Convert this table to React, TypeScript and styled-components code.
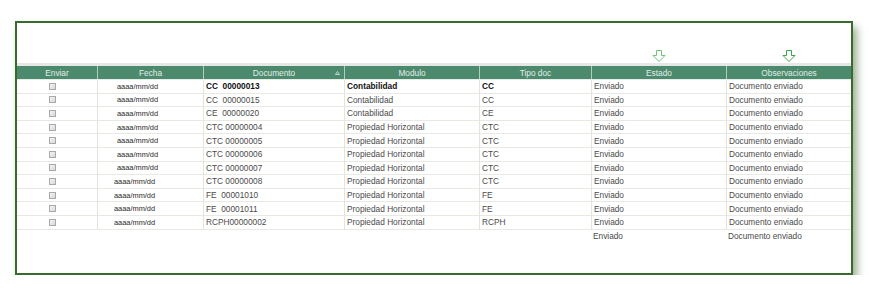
import styled, { createGlobalStyle } from 'styled-components'

const GlobalStyle = createGlobalStyle`
  html, body {
    margin: 0;
    padding: 0;
    background: #ffffff;
  }
  body {
    font-family: "Liberation Sans", Arial, sans-serif;
  }
`

const COLUMNS = '80px 106px 141px 135px 112px 135px 125px'

const Page = styled.div`
  padding: 21px 0 0 15px;
`

const Frame = styled.div`
  box-sizing: border-box;
  width: 838px;
  height: 254px;
  border: 2px solid #3a6a2d;
  background: #fff;
  box-shadow: 4px 6px 8px rgba(85, 120, 70, 0.6);
`

const ArrowBar = styled.div`
  display: grid;
  grid-template-columns: ${COLUMNS};
  height: 40px;
  align-items: end;
`

const ArrowSlot = styled.div`
  display: flex;
  justify-content: center;
  padding-bottom: 1px;
`

const Strip = styled.div`
  height: 3px;
  background: #e7e7e7;
`

const HeaderRow = styled.div`
  display: grid;
  grid-template-columns: ${COLUMNS};
  height: 13px;
  background: #4c8a6e;
  border-bottom: 1px solid #e4ede8;
`

const HeaderCell = styled.div<{ $first?: boolean }>`
  position: relative;
  display: flex;
  align-items: center;
  justify-content: center;
  font-size: 8.3px;
  color: #e3ede7;
  border-left: ${p => (p.$first ? 'none' : '1px solid #b4cbbf')};
`

const SortMark = styled.svg`
  position: absolute;
  right: 4px;
  top: 5px;
`

const Row = styled.div`
  display: grid;
  grid-template-columns: ${COLUMNS};
  height: 13.6px;
`

const Cell = styled.div<{ $empty?: boolean; $first?: boolean; $bold?: boolean; $small?: boolean; $pad?: number }>`
  box-sizing: border-box;
  display: flex;
  align-items: center;
  padding-left: ${p => p.$pad ?? 2}px;
  font-size: ${p => (p.$small ? '7.4px' : '8.3px')};
  font-weight: ${p => (p.$bold ? 700 : 400)};
  color: ${p => (p.$bold ? '#111' : p.$small ? '#2a2a2a' : '#4a4a4a')};
  white-space: pre;
  border-bottom: ${p => (p.$empty ? 'none' : '1px solid #e9e9e3')};
  border-left: ${p => (p.$empty || p.$first ? 'none' : '1px solid #e4e4de')};
`

const Check = styled.span`
  box-sizing: border-box;
  width: 7px;
  height: 7px;
  border: 1px solid #a9a9a9;
  background: linear-gradient(135deg, #f4f4f4, #d9d9d9);
`

const DownArrow = ({ color }: { color: string }) => (
  <svg width="14" height="12" viewBox="0 0 14 12">
    <path d="M4.5 0.5 H9.5 V5.5 H13 L7 11.5 L1 5.5 H4.5 Z" fill="#fff" stroke={color} strokeWidth="1" />
  </svg>
)

const headers = ['Enviar', 'Fecha', 'Documento', 'Modulo', 'Tipo doc', 'Estado', 'Observaciones']

const rows = [
  ['CC  00000013', 'Contabilidad', 'CC'],
  ['CC  00000015', 'Contabilidad', 'CC'],
  ['CE  00000020', 'Contabilidad', 'CE'],
  ['CTC 00000004', 'Propiedad Horizontal', 'CTC'],
  ['CTC 00000005', 'Propiedad Horizontal', 'CTC'],
  ['CTC 00000006', 'Propiedad Horizontal', 'CTC'],
  ['CTC 00000007', 'Propiedad Horizontal', 'CTC'],
  ['CTC 00000008', 'Propiedad Horizontal', 'CTC'],
  ['FE  00001010', 'Propiedad Horizontal', 'FE'],
  ['FE  00001011', 'Propiedad Horizontal', 'FE'],
  ['RCPH00000002', 'Propiedad Horizontal', 'RCPH'],
]

export default function App() {
  return (
    <>
      <GlobalStyle />
      <Page>
        <Frame>
          <ArrowBar>
            <ArrowSlot />
            <ArrowSlot />
            <ArrowSlot />
            <ArrowSlot />
            <ArrowSlot />
            <ArrowSlot>
              <DownArrow color="#72c07a" />
            </ArrowSlot>
            <ArrowSlot>
              <DownArrow color="#3fa14a" />
            </ArrowSlot>
          </ArrowBar>
          <Strip />
          <HeaderRow>
            {headers.map((h, i) => (
              <HeaderCell key={h} $first={i === 0}>
                {h}
                {h === 'Documento' && (
                  <SortMark width="5" height="4" viewBox="0 0 5 4">
                    <path d="M2.5 0.5 L4.5 3.5 H0.5 Z" fill="none" stroke="#dfe9e3" strokeWidth="0.8" />
                  </SortMark>
                )}
              </HeaderCell>
            ))}
          </HeaderRow>
          {rows.map((r, i) => (
            <Row key={r[0]}>
              <Cell $first $pad={32}>
                <Check />
              </Cell>
              <Cell $small $pad={i >= 7 ? 16 : 19}>aaaa/mm/dd</Cell>
              <Cell $bold={i === 0}>{r[0]}</Cell>
              <Cell $bold={i === 0}>{r[1]}</Cell>
              <Cell $bold={i === 0}>{r[2]}</Cell>
              <Cell>Enviado</Cell>
              <Cell>Documento enviado</Cell>
            </Row>
          ))}
          <Row>
            <Cell $empty />
            <Cell $empty />
            <Cell $empty />
            <Cell $empty />
            <Cell $empty />
            <Cell $empty>Enviado</Cell>
            <Cell $empty>Documento enviado</Cell>
          </Row>
        </Frame>
      </Page>
    </>
  )
}
